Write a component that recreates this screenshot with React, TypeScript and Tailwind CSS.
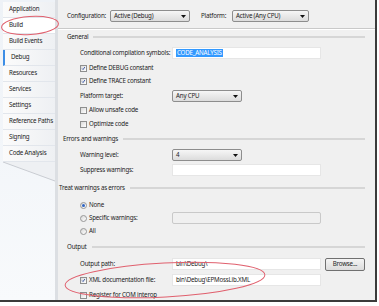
import React from "react";

// tabs of the project designer, left column
const tabs = [
  "Application",
  "Build",
  "Build Events",
  "Debug",
  "Resources",
  "Services",
  "Settings",
  "Reference Paths",
  "Signing",
  "Code Analysis",
];

const Check = ({ checked = false }: { checked?: boolean }) => (
  <span className="w-[7px] h-[7px] shrink-0 border border-[#8e8f8f] bg-gradient-to-br from-[#dadada] to-white flex items-center justify-center">
    {checked && (
      <svg viewBox="0 0 7 7" className="w-[7px] h-[7px]">
        <path d="M1.6 3.6 L2.9 5 L5.4 1.4" stroke="#2a4a9e" strokeWidth="1.2" fill="none" />
      </svg>
    )}
  </span>
);

const Radio = ({ checked = false }: { checked?: boolean }) => (
  <span className="w-[7px] h-[7px] shrink-0 rounded-full border border-[#979797] bg-gradient-to-br from-[#d8d8d8] to-white flex items-center justify-center">
    {checked && <span className="w-[3px] h-[3px] rounded-full bg-[#2f65c4]" />}
  </span>
);

const Select = ({ value, w }: { value: string; w: string }) => (
  <div
    className={`${w} h-[12px] border border-[#8d8d8d] rounded-[2px] bg-gradient-to-b from-[#f6f6f6] to-[#dcdcdc] flex items-center justify-between pl-[3px] pr-[3px]`}
  >
    <span>{value}</span>
    <svg viewBox="0 0 5 3" className="w-[5px] h-[3px]">
      <path d="M0 0 H5 L2.5 3 Z" fill="#111" />
    </svg>
  </div>
);

const TextBox = ({
  children,
  disabled = false,
  w = "w-[149px]",
}: {
  children?: React.ReactNode;
  disabled?: boolean;
  w?: string;
}) => (
  <div
    className={[
      w,
      "h-[12px] flex items-center pl-[3px]",
      disabled
        ? "border border-[#c9c9c9] rounded-[2px] bg-[#f0f0f0]"
        : "border border-[#e6e6e6] bg-white",
    ].join(" ")}
  >
    {children}
  </div>
);

const Header = ({ text, pl, h }: { text: string; pl: string; h: string }) => (
  <div className={`${h} ${pl} pr-[10px] flex items-center gap-[5px]`}>
    <span className="shrink-0">{text}</span>
    <div className="flex-1 h-[2px] bg-[#d6d6d6]" />
  </div>
);

const Row = ({
  h,
  label,
  children,
}: {
  h: string;
  label?: React.ReactNode;
  children?: React.ReactNode;
}) => (
  <div className={`${h} flex items-center pl-[22px]`}>
    <div className="w-[92px] shrink-0 flex items-center">{label}</div>
    {children}
  </div>
);

const CheckRow = ({ h, text, checked }: { h: string; text: string; checked?: boolean }) => (
  <div className={`${h} flex items-center pl-[22px] gap-[2px]`}>
    <Check checked={checked} />
    <span>{text}</span>
  </div>
);

const RadioRow = ({ h, text, checked }: { h: string; text: string; checked?: boolean }) => (
  <div className={`${h} flex items-center pl-[22px] gap-[2px]`}>
    <Radio checked={checked} />
    <span>{text}</span>
  </div>
);

export default function App() {
  return (
    <div className="relative w-[379px] h-[306px] bg-white overflow-hidden font-['Noto_Sans',sans-serif] text-[6.2px] tracking-[-0.2px] leading-none text-[#1c1c1c] whitespace-nowrap">
      <div className="w-[377px] h-[302px] border-r-2 border-b-2 border-[#3b3b3b] flex">
        {/* left tabs */}
        <aside className="w-[58px] shrink-0 flex flex-col bg-gradient-to-b from-[#eef2f7] to-[#f8fafc] border-r-[3px] border-[#dcdfe3]">
          <div className="h-[2px]" />
          {tabs.map((t) => (
            <div
              key={t}
              className={[
                "h-[16px] ml-[3px] flex items-center pl-[6px] border-b border-[#e2e6ec]",
                t === "Build" ? "bg-white" : "bg-gradient-to-r from-[#fbfbfb] to-[#eef0f3]",
                t === "Debug" ? "border-l-2 border-l-[#3d8ee6] pl-[4px]" : "",
              ].join(" ")}
            >
              {t}
            </div>
          ))}
          <svg viewBox="0 0 55 20" className="w-[55px] h-[20px]">
            <path d="M3 0 L55 19 L55 0 Z" fill="#eef0f3" />
            <path d="M3 0 L55 19" stroke="#c9ccd2" strokeWidth="1" />
          </svg>
        </aside>

        {/* property page */}
        <main className="flex-1 bg-[#f0f0f0] flex flex-col">
          <div className="h-[10px]" />
          <div className="h-[12px] flex items-center pl-[9px]">
            <span className="w-[43px] shrink-0">Configuration:</span>
            <Select value="Active (Debug)" w="w-[80px]" />
            <span className="ml-[11px] w-[31px] shrink-0">Platform:</span>
            <Select value="Active (Any CPU)" w="w-[77px]" />
          </div>
          <div className="h-[6px]" />
          <div className="h-[2px] border-t border-[#c9c9c9] border-b border-b-white" />

          <Header text="General" pl="pl-[9px]" h="h-[14px]" />
          <Row h="h-[18px]" label="Conditional compilation symbols:">
            <TextBox>
              <span className="bg-[#3399ff] text-white px-[1px] py-[1px]">CODE_ANALYSIS</span>
            </TextBox>
          </Row>
          <CheckRow h="h-[12px]" text="Define DEBUG constant" checked />
          <CheckRow h="h-[14px]" text="Define TRACE constant" checked />
          <Row h="h-[16px]" label="Platform target:">
            <Select value="Any CPU" w="w-[70px]" />
          </Row>
          <CheckRow h="h-[12px]" text="Allow unsafe code" />
          <CheckRow h="h-[16px]" text="Optimize code" />

          <Header text="Errors and warnings" pl="pl-[5px]" h="h-[14px]" />
          <Row h="h-[18px]" label="Warning level:">
            <Select value="4" w="w-[70px]" />
          </Row>
          <Row h="h-[12px]" label="Suppress warnings:">
            <TextBox />
          </Row>

          <Header text="Treat warnings as errors" pl="pl-[1px]" h="h-[24px]" />
          <RadioRow h="h-[10px]" text="None" checked />
          <Row
            h="h-[16px]"
            label={
              <span className="flex items-center gap-[2px]">
                <Radio />
                Specific warnings:
              </span>
            }
          >
            <TextBox disabled />
          </Row>
          <RadioRow h="h-[10px]" text="All" />

          <Header text="Output" pl="pl-[9px]" h="h-[22px]" />
          <Row h="h-[12px]" label="Output path:">
            <TextBox>bin\Debug\</TextBox>
            <div className="ml-[4px] w-[40px] h-[13px] border border-[#707070] rounded-[2px] bg-gradient-to-b from-[#f4f4f4] to-[#dcdcdc] flex items-center justify-center">
              Browse...
            </div>
          </Row>
          <Row
            h="h-[20px]"
            label={
              <span className="flex items-center gap-[2px]">
                <Check checked />
                XML documentation file:
              </span>
            }
          >
            <TextBox>bin\Debug\EPMossLib.XML</TextBox>
          </Row>
          <CheckRow h="h-[10px]" text="Register for COM interop" />
        </main>
      </div>

      {/* red annotation ellipses */}
      <svg className="absolute left-0 top-0 w-[379px] h-[306px] pointer-events-none" viewBox="0 0 379 306">
        <ellipse cx="30" cy="25.5" rx="28.5" ry="9" transform="rotate(-4 30 25.5)" fill="none" stroke="#e0606e" strokeWidth="1" />
        <ellipse cx="165" cy="280" rx="100" ry="17" transform="rotate(-3 165 280)" fill="none" stroke="#e0606e" strokeWidth="1" />
      </svg>
    </div>
  );
}
